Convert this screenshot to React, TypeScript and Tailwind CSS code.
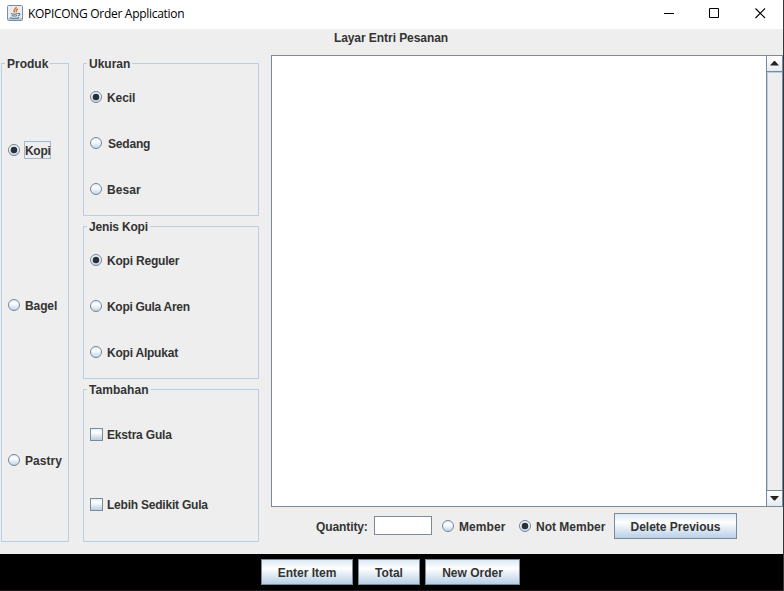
import React, { ReactNode } from "react";

function Radio({ checked = false }: { checked?: boolean }) {
  return (
    <svg width="13" height="13" viewBox="0 0 13 13" className="mb-[2px] block shrink-0">
      <defs>
        <linearGradient id="radioFill" x1="0" y1="0" x2="0" y2="1">
          <stop offset="0" stopColor="#dfeaf5" />
          <stop offset="0.35" stopColor="#ffffff" />
          <stop offset="1" stopColor="#bfd3e8" />
        </linearGradient>
      </defs>
      <circle cx="6" cy="6" r="5.5" fill="url(#radioFill)" stroke="#74859a" strokeWidth="1" />
      {checked && <circle cx="6" cy="6" r="3.3" fill="#2b2f36" />}
    </svg>
  );
}

function CheckBox() {
  return (
    <span className="mb-px block h-[13px] w-[13px] shrink-0 border border-[#7a8a99] bg-linear-to-b from-[#e3edf7] via-white via-30% to-[#b8cfe5]" />
  );
}

interface OptionProps {
  label: string;
  checked?: boolean;
  focused?: boolean;
  box?: boolean;
  text?: string;
}

function Option({ label, checked, focused, box, text = "" }: OptionProps) {
  return (
    <label className="flex h-[18px] items-center">
      {box ? <CheckBox /> : <Radio checked={checked} />}
      <span
        className={`ml-[3px] flex h-[18px] items-center whitespace-nowrap border ${
          focused ? "-mt-[2px] w-[27px] border-[#a3b8cc] pt-[2px]" : "border-transparent"
        } ${text}`}
      >
        {label}
      </span>
    </label>
  );
}

function Group({ title, className, titleText = "", children }: { title: string; className: string; titleText?: string; children: ReactNode }) {
  return (
    <section className={`flex flex-col border border-[#b8cfe5] ${className}`}>
      <h2 className={`-mt-[9px] ml-[3px] h-[18px] self-start bg-[#eeeeee] px-[2px] leading-[18px] whitespace-nowrap ${titleText}`}>{title}</h2>
      {children}
    </section>
  );
}

function Button({ children, className }: { children: ReactNode; className: string }) {
  return (
    <button
      className={`flex h-[26px] items-center justify-center border border-[#7a8a99] bg-linear-to-b from-[#dce8f3] via-white via-35% to-[#b8cfe5] pt-px font-bold whitespace-nowrap ${className}`}
    >
      {children}
    </button>
  );
}

function JavaIcon() {
  return (
    <svg width="16" height="16" viewBox="0 0 16 16" className="block">
      <rect x="0.5" y="0.5" width="15" height="15" rx="1" fill="#e9edf0" stroke="#7590a8" />
      <path d="M1 13h14v2H1z" fill="#b9c7d3" />
      <path d="M9 1.800c1 1.800-3.300 2.700-2 4.500l.8 1.200M11 4c-1.900.8-2.600 1.700-1.300 3.300" fill="none" stroke="#e2703a" strokeWidth="1.400" />
      <path d="M4 8.500c1.800.8 5 .8 6.700 0M4.700 10.400c1.700.7 4 .7 5.500 0M3 12.400c2.200.9 6.800.9 9.200 0M11 8.500c2.600-.5 2.300 1.900.1 2.400" fill="none" stroke="#50758f" strokeWidth="1.100" />
    </svg>
  );
}

function Arrow({ down = false }: { down?: boolean }) {
  return (
    <div className={`flex h-[15px] w-[15px] justify-center bg-linear-to-b from-white to-[#e6ebf0] ${down ? "items-center" : "items-start pt-[5px]"}`}>
      <svg width="9" height="5" viewBox="0 0 9 5" className="block">
        <path d={down ? "M0 0h9L5 4.500H4z" : "M0 4.500h9L5 0H4z"} fill="#222" />
      </svg>
    </div>
  );
}

export default function App() {
  return (
    <div className="flex h-[591px] w-[784px] flex-col overflow-hidden border-r border-[#35383c] bg-[#eeeeee] font-['Liberation_Sans',Arial,sans-serif] text-[12px] font-bold text-[#333333]">
      <header className="flex h-[29px] shrink-0 items-start bg-white pl-[7px]">
        <div className="mt-[5px]">
          <JavaIcon />
        </div>
        <h1 className="mt-[5px] ml-[5px] font-['Open_Sans','Noto_Sans',sans-serif] text-[12px] leading-[18px] font-normal tracking-[-0.3px] text-black">
          KOPICONG Order Application
        </h1>
        <svg width="102" height="11" viewBox="0 0 102 11" className="mt-2 mr-[17px] ml-auto block" fill="none" stroke="#000">
          <path d="M0 5.500h10M45.500.5h9v9h-9z" />
          <path d="M91.500.5l9.500 9.500M101 .5l-9.500 9.500" strokeWidth="1.100" />
        </svg>
      </header>

      <div className="h-[18px] shrink-0 pr-px text-center leading-[18px] tracking-[-0.06px]">Layar Entri Pesanan</div>

      <main className="flex h-[507px] shrink-0">
        <Group title="Produk" className="mt-4 ml-px h-[479px] w-[68px]">
          <div className="mt-[69px] ml-[6px] flex flex-col gap-[137px]">
            <Option label="Kopi" checked focused text="tracking-[-0.3px]" />
            <Option label="Bagel" text="tracking-[-0.1px]" />
            <Option label="Pastry" text="tracking-[0.05px]" />
          </div>
        </Group>

        <div className="mt-4 ml-[14px] flex w-[176px] flex-col gap-[10px]">
          <Group title="Ukuran" className="h-[153px]">
            <div className="mt-4 ml-[6px] flex flex-col gap-7">
              <Option label="Kecil" checked text="tracking-[-0.1px]" />
              <Option label="Sedang" text="pl-px tracking-[-0.2px]" />
              <Option label="Besar" text="tracking-[0.1px]" />
            </div>
          </Group>
          <Group title="Jenis Kopi" className="h-[153px]" titleText="tracking-[-0.18px]">
            <div className="mt-4 ml-[6px] flex flex-col gap-7">
              <Option label="Kopi Reguler" checked text="tracking-[-0.2px]" />
              <Option label="Kopi Gula Aren" text="tracking-[-0.3px]" />
              <Option label="Kopi Alpukat" text="tracking-[-0.22px]" />
            </div>
          </Group>
          <Group title="Tambahan" className="h-[153px]" titleText="tracking-[0.05px]">
            <div className="mt-[27px] ml-[6px] flex flex-col gap-[52px]">
              <Option label="Ekstra Gula" box text="tracking-[-0.18px]" />
              <Option label="Lebih Sedikit Gula" box text="tracking-[-0.22px]" />
            </div>
          </Group>
        </div>

        <div className="mt-2 ml-3 flex w-[512px] flex-col">
          <div className="flex h-[452px] border border-[#7a8a99] bg-white">
            <div className="flex-1" />
            <div className="flex w-4 flex-col border-l border-[#7a8a99]">
              <Arrow />
              <div className="flex-1 border-y border-[#7a8a99] bg-[#eeeeee] shadow-[inset_1px_1px_0_#b8cfe5]" />
              <Arrow down />
            </div>
          </div>
          <div className="mt-[6px] flex h-[26px] items-center pl-[45px]">
            <span className="w-[58px] pt-px tracking-[-0.1px] whitespace-nowrap">Quantity:</span>
            <div className="mb-px h-[19px] w-[58px] border border-[#7a8a99] bg-white" />
            <div className="mt-[2px] ml-[10px] w-[77px]">
              <Option label="Member" text="tracking-[0.08px]" />
            </div>
            <div className="mt-[2px] w-[95px]">
              <Option label="Not Member" checked />
            </div>
            <Button className="w-[123px]">Delete Previous</Button>
          </div>
        </div>
      </main>

      <footer className="flex h-[37px] shrink-0 gap-[5px] border-b border-[#211719] bg-black pt-[5px] pl-[261px]">
        <Button className="w-[92px]">Enter Item</Button>
        <Button className="w-[62px]">Total</Button>
        <Button className="w-[95px]">New Order</Button>
      </footer>
    </div>
  );
}
